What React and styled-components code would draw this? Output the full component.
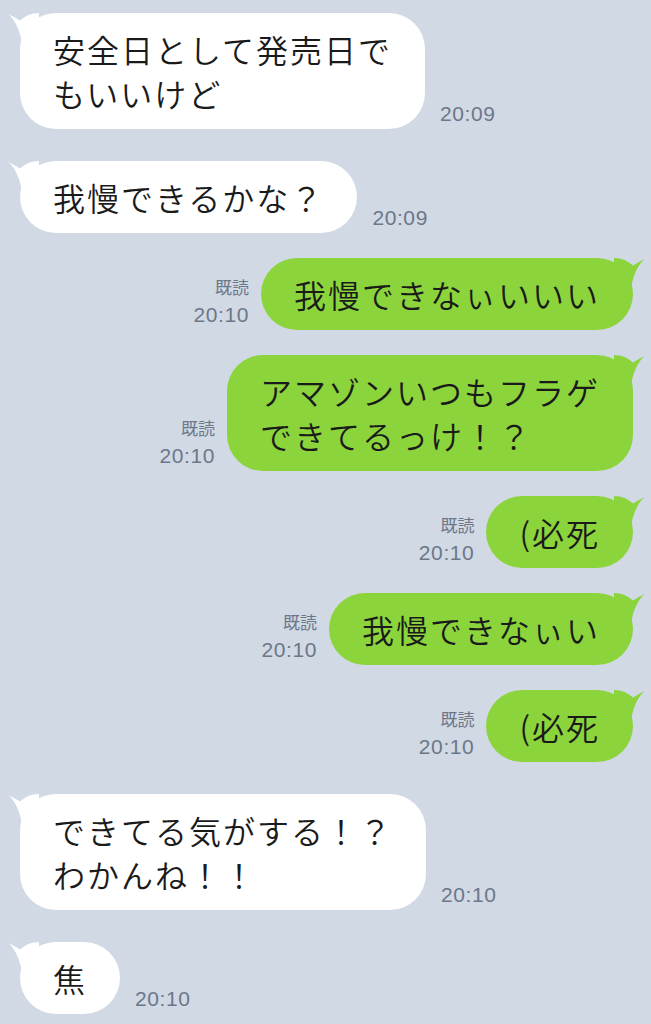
import styled, { createGlobalStyle } from "styled-components";

const GlobalStyle = createGlobalStyle`
  html, body {
    margin: 0;
    padding: 0;
    background: #d0d9e4;
  }
`;

const Chat = styled.div`
  width: 651px;
  height: 1024px;
  overflow: hidden;
  box-sizing: border-box;
  padding: 13px 18px 0 20px;
  display: flex;
  flex-direction: column;
  background: #d0d9e4;
  font-family: "Noto Sans CJK JP", sans-serif;
`;

const Row = styled.div`
  display: flex;
  align-items: flex-end;
  justify-content: ${(p) => (p.$mine ? "flex-end" : "flex-start")};
  gap: ${(p) => (p.$mine ? "12px" : "15px")};
  margin-top: ${(p) => (p.$mine ? "25px" : "32px")};
  &:first-child {
    margin-top: 0;
  }
`;

const Bubble = styled.div`
  position: relative;
  background: ${(p) => (p.$mine ? "#8bd43c" : "#ffffff")};
  color: #1a1a1a;
  border-radius: 36px;
  padding: 14px 33px 14px 33px;
  font-size: 32px;
  font-weight: 350;
  letter-spacing: 2px;
  line-height: 44px;
  white-space: nowrap;
`;

const Tail = styled.svg`
  position: absolute;
  top: 0;
  width: 31px;
  height: 40px;
  ${(p) =>
    p.$mine
      ? "right: -12px;"
      : "left: -12px; transform: scaleX(-1);"}
`;

const Meta = styled.div`
  display: flex;
  flex-direction: column;
  align-items: flex-end;
  margin-bottom: 3px;
  color: #6c7789;
  font-family: "Liberation Sans", "Noto Sans CJK JP", sans-serif;
`;

const Read = styled.span`
  font-size: 17px;
  line-height: 26px;
`;

const Time = styled.span`
  font-size: 21px;
  line-height: 25px;
  letter-spacing: 0.6px;
`;

const messages = [
  { lines: ["安全日として発売日で", "もいいけど"], time: "20:09" },
  { lines: ["我慢できるかな？"], time: "20:09" },
  { mine: true, lines: ["我慢できなぃいいい"], time: "20:10" },
  { mine: true, lines: ["アマゾンいつもフラゲ", "できてるっけ！？"], time: "20:10" },
  { mine: true, lines: ["(必死"], time: "20:10" },
  { mine: true, lines: ["我慢できなぃい"], time: "20:10" },
  { mine: true, lines: ["(必死"], time: "20:10" },
  { lines: ["できてる気がする！？", "わかんね！！"], time: "20:10" },
  { lines: ["焦"], time: "20:10" },
];

const BubbleTail = ({ mine }) => (
  <Tail $mine={mine} viewBox="0 0 31 40">
    <path
      d="M0 0 C8 0 14 3 19 7.5 C23 5 27 3 30.5 1 C25 6 21 13 18 25 L18 40 L0 40 Z"
      fill={mine ? "#8bd43c" : "#ffffff"}
    />
  </Tail>
);

const Message = ({ msg }) => {
  const meta = (
    <Meta>
      {msg.mine && <Read>既読</Read>}
      <Time>{msg.time}</Time>
    </Meta>
  );
  return (
    <Row $mine={msg.mine}>
      {msg.mine && meta}
      <Bubble $mine={msg.mine}>
        <BubbleTail mine={msg.mine} />
        {msg.lines.map((line, i) => (
          <div key={i}>{line}</div>
        ))}
      </Bubble>
      {!msg.mine && meta}
    </Row>
  );
};

export default function App() {
  return (
    <>
      <GlobalStyle />
      <Chat>
        {messages.map((m, i) => (
          <Message key={i} msg={m} />
        ))}
      </Chat>
    </>
  );
}
